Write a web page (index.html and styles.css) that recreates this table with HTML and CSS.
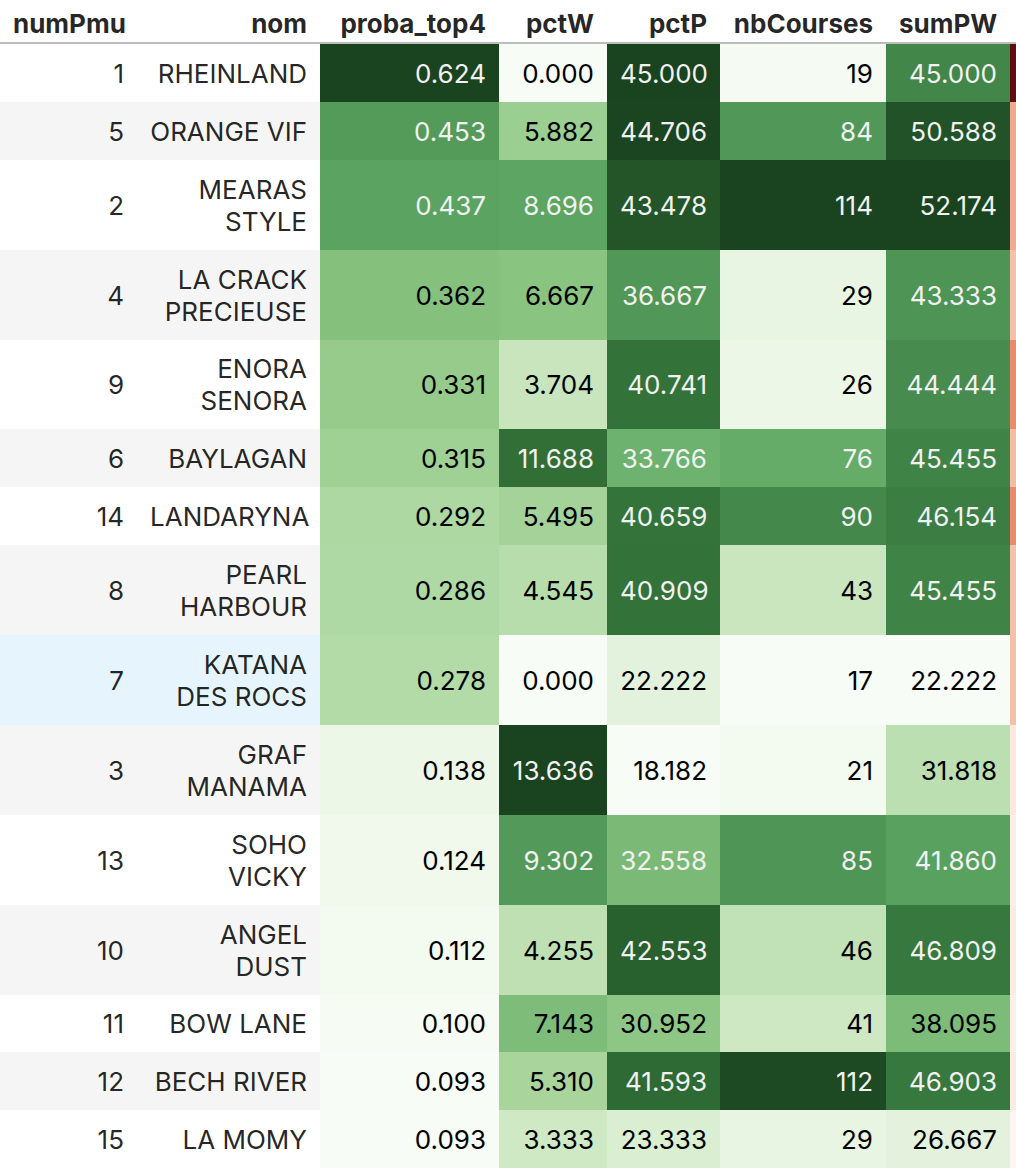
FILE: index.html
```html
<!DOCTYPE html>
<html lang="fr">
<head>
<meta charset="utf-8">
<title>Pronostics</title>
<link rel="stylesheet" href="styles.css">
</head>
<body>
<div class="wrap">
<table class="df">
  <colgroup>
    <col class="c-num"><col class="c-nom"><col class="c-proba"><col class="c-pctw"><col class="c-pctp"><col class="c-nb"><col class="c-sum"><col class="c-extra">
  </colgroup>
  <thead>
    <tr>
      <th>numPmu</th>
      <th>nom</th>
      <th data-cmap="Greens">proba_top4</th>
      <th data-cmap="Greens">pctW</th>
      <th data-cmap="Greens">pctP</th>
      <th data-cmap="Greens">nbCourses</th>
      <th data-cmap="Greens">sumPW</th>
      <th data-cmap="Reds"></th>
    </tr>
  </thead>
  <tbody>
    <tr><td>1</td><td>RHEINLAND</td><td>0.624</td><td>0.000</td><td>45.000</td><td>19</td><td>45.000</td><td data-value="100"></td></tr>
    <tr><td>5</td><td>ORANGE VIF</td><td>0.453</td><td>5.882</td><td>44.706</td><td>84</td><td>50.588</td><td data-value="32"></td></tr>
    <tr><td>2</td><td>MEARAS<br>STYLE</td><td>0.437</td><td>8.696</td><td>43.478</td><td>114</td><td>52.174</td><td data-value="31"></td></tr>
    <tr><td>4</td><td>LA CRACK<br>PRECIEUSE</td><td>0.362</td><td>6.667</td><td>36.667</td><td>29</td><td>43.333</td><td data-value="24"></td></tr>
    <tr><td>9</td><td>ENORA<br>SENORA</td><td>0.331</td><td>3.704</td><td>40.741</td><td>26</td><td>44.444</td><td data-value="42"></td></tr>
    <tr><td>6</td><td>BAYLAGAN</td><td>0.315</td><td>11.688</td><td>33.766</td><td>76</td><td>45.455</td><td data-value="25"></td></tr>
    <tr><td>14</td><td>LANDARYNA</td><td>0.292</td><td>5.495</td><td>40.659</td><td>90</td><td>46.154</td><td data-value="42"></td></tr>
    <tr><td>8</td><td>PEARL<br>HARBOUR</td><td>0.286</td><td>4.545</td><td>40.909</td><td>43</td><td>45.455</td><td data-value="24"></td></tr>
    <tr class="hover"><td>7</td><td>KATANA<br>DES ROCS</td><td>0.278</td><td>0.000</td><td>22.222</td><td>17</td><td>22.222</td><td data-value="24"></td></tr>
    <tr><td>3</td><td>GRAF<br>MANAMA</td><td>0.138</td><td>13.636</td><td>18.182</td><td>21</td><td>31.818</td><td data-value="8"></td></tr>
    <tr><td>13</td><td>SOHO<br>VICKY</td><td>0.124</td><td>9.302</td><td>32.558</td><td>85</td><td>41.860</td><td data-value="5"></td></tr>
    <tr><td>10</td><td>ANGEL<br>DUST</td><td>0.112</td><td>4.255</td><td>42.553</td><td>46</td><td>46.809</td><td data-value="7"></td></tr>
    <tr><td>11</td><td>BOW LANE</td><td>0.100</td><td>7.143</td><td>30.952</td><td>41</td><td>38.095</td><td data-value="4"></td></tr>
    <tr><td>12</td><td>BECH RIVER</td><td>0.093</td><td>5.310</td><td>41.593</td><td>112</td><td>46.903</td><td data-value="6"></td></tr>
    <tr><td>15</td><td>LA MOMY</td><td>0.093</td><td>3.333</td><td>23.333</td><td>29</td><td>26.667</td><td data-value="0"></td></tr>
  </tbody>
</table>
</div>
<script src="script.js"></script>
</body>
</html>
```

FILE: styles.css
```css
html, body {
  margin: 0;
  padding: 0;
  background: #ffffff;
}

.wrap {
  width: 1016px;
  overflow: hidden;
}

.df {
  border-collapse: collapse;
  border-spacing: 0;
  table-layout: fixed;
  width: 1160px;
  font-family: "Inter", "Noto Sans", sans-serif;
  font-size: 26px;
  line-height: 32px;
  color: rgba(0, 0, 0, 0.87);
}

.c-num { width: 137px; }
.c-nom { width: 183px; }
.c-proba { width: 179px; }
.c-pctw { width: 108px; }
.c-pctp { width: 113px; }
.c-nb { width: 166px; }
.c-sum { width: 124px; }
.c-extra { width: 150px; }

.df th,
.df td {
  padding: 13.95px 13px 11.95px;
  text-align: right;
  vertical-align: middle;
  white-space: nowrap;
  border: none;
}

.df thead th {
  font-weight: 700;
  padding: 8px 13px 2px;
  border-bottom: 2px solid #bdbdbd;
  background: #ffffff;
}

.df tbody tr:nth-child(even) {
  background: #f5f5f5;
}

.df tbody tr.hover {
  background: #e5f4fd;
}
```

FILE: script.js
```js
(function () {
  var maps = {
    Greens: ['#f7fcf5', '#e5f5e0', '#c7e9c0', '#a1d99b', '#74c476', '#41ab5d', '#238b45', '#006d2c', '#00441b'],
    Reds: ['#fff5f0', '#fee0d2', '#fcbba1', '#fc9272', '#fb6a4a', '#ef3b2c', '#cb181d', '#a50f15', '#67000d']
  };
  function hex(h) {
    return [1, 3, 5].map(function (i) { return parseInt(h.substr(i, 2), 16) / 255; });
  }
  function lut(name) {
    var stops = maps[name].map(hex), n = stops.length - 1, out = [];
    for (var i = 0; i < 256; i++) {
      var t = i / 255 * n, k = Math.min(Math.floor(t), n - 1), f = t - k;
      out.push([0, 1, 2].map(function (c) { return stops[k][c] + (stops[k + 1][c] - stops[k][c]) * f; }));
    }
    return out;
  }
  function lin(c) { return c <= 0.04045 ? c / 12.92 : Math.pow((c + 0.055) / 1.055, 2.4); }
  function enc(c) { return c <= 0.0031308 ? 12.92 * c : 1.055 * Math.pow(c, 1 / 2.4) - 0.055; }
  function display(rgb) {
    var r = lin(rgb[0]), g = lin(rgb[1]), b = lin(rgb[2]);
    var R = 0.8225 * r + 0.1774 * g;
    var G = 0.0332 * r + 0.9669 * g;
    var B = 0.0171 * r + 0.0724 * g + 0.9108 * b;
    return 'rgb(' + [R, G, B].map(function (v) {
      return Math.round(Math.min(1, Math.max(0, enc(v))) * 255);
    }).join(',') + ')';
  }
  function lum(rgb) {
    return 0.2126 * lin(rgb[0]) + 0.7152 * lin(rgb[1]) + 0.0722 * lin(rgb[2]);
  }
  var table = document.querySelector('.df');
  var heads = table.querySelectorAll('thead th');
  var rows = table.querySelectorAll('tbody tr');
  heads.forEach(function (th) {
    var name = th.getAttribute('data-cmap');
    if (!name) return;
    var idx = th.cellIndex, table256 = lut(name);
    var cells = [], vals = [];
    rows.forEach(function (tr) {
      var td = tr.cells[idx];
      cells.push(td);
      var raw = td.hasAttribute('data-value') ? td.getAttribute('data-value') : td.textContent;
      vals.push(parseFloat(raw));
    });
    var mn = Math.min.apply(null, vals), mx = Math.max.apply(null, vals);
    cells.forEach(function (td, i) {
      var x = mx > mn ? (vals[i] - mn) / (mx - mn) : 0;
      var j = Math.min(255, Math.max(0, Math.floor(x * 256)));
      var rgb = table256[j];
      td.style.backgroundColor = display(rgb);
      td.style.color = lum(rgb) < 0.408 ? '#f1f1f1' : '#000000';
    });
  });
})();
```
